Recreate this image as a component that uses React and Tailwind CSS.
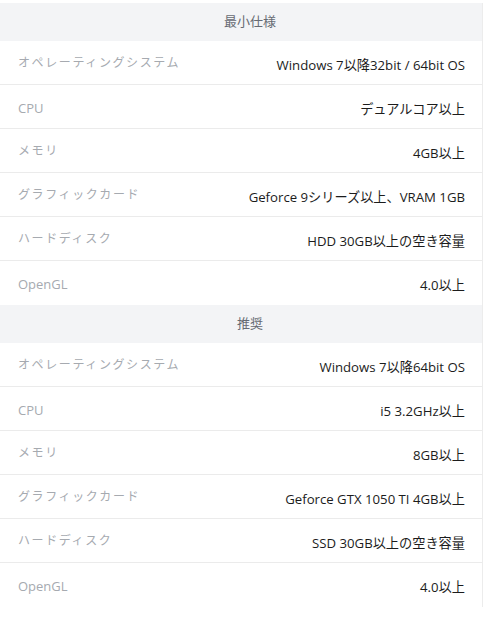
import React from "react";

const sections = [
  {
    title: "最小仕様",
    rows: [
      ["オペレーティングシステム", "Windows 7以降32bit / 64bit OS"],
      ["CPU", "デュアルコア以上", true],
      ["メモリ", "4GB以上"],
      ["グラフィックカード", "Geforce 9シリーズ以上、VRAM 1GB"],
      ["ハードディスク", "HDD 30GB以上の空き容量"],
      ["OpenGL", "4.0以上", true],
    ],
  },
  {
    title: "推奨",
    rows: [
      ["オペレーティングシステム", "Windows 7以降64bit OS"],
      ["CPU", "i5 3.2GHz以上", true],
      ["メモリ", "8GB以上"],
      ["グラフィックカード", "Geforce GTX 1050 TI 4GB以上"],
      ["ハードディスク", "SSD 30GB以上の空き容量"],
      ["OpenGL", "4.0以上", true],
    ],
  },
];

export default function App() {
  return (
    <div
      className="w-[484px] h-[618px] bg-white pt-[3px]"
      style={{ fontFamily: '"Open Sans", "Noto Sans CJK JP", sans-serif' }}
    >
      <div className="w-[483px] border-r border-[#ececec]">
        {sections.map((s, si) => (
          <div key={si}>
            <div className="h-[38px] bg-[#f3f4f6] flex items-center justify-center pl-[18px] text-[13px] text-[#666b73]">
              {s.title}
            </div>
            {s.rows.map(([label, value, latin], i) => (
              <div
                key={i}
                className={`flex justify-between items-center pl-[18px] pr-[17px] ${
                  i === s.rows.length - 1 ? "h-[44px]" : "h-[44px] border-b border-[#ebebeb]"
                }`}
              >
                {latin ? (
                  <span className="text-[13px] text-[#a6aab0] pt-[4px]">{label}</span>
                ) : (
                  <span className="text-[12px] tracking-[1.6px] text-[#a6aab0]">{label}</span>
                )}
                <span className="text-[13.2px] text-[#1c1c1c] pt-[6px]">{value}</span>
              </div>
            ))}
          </div>
        ))}
      </div>
    </div>
  );
}
